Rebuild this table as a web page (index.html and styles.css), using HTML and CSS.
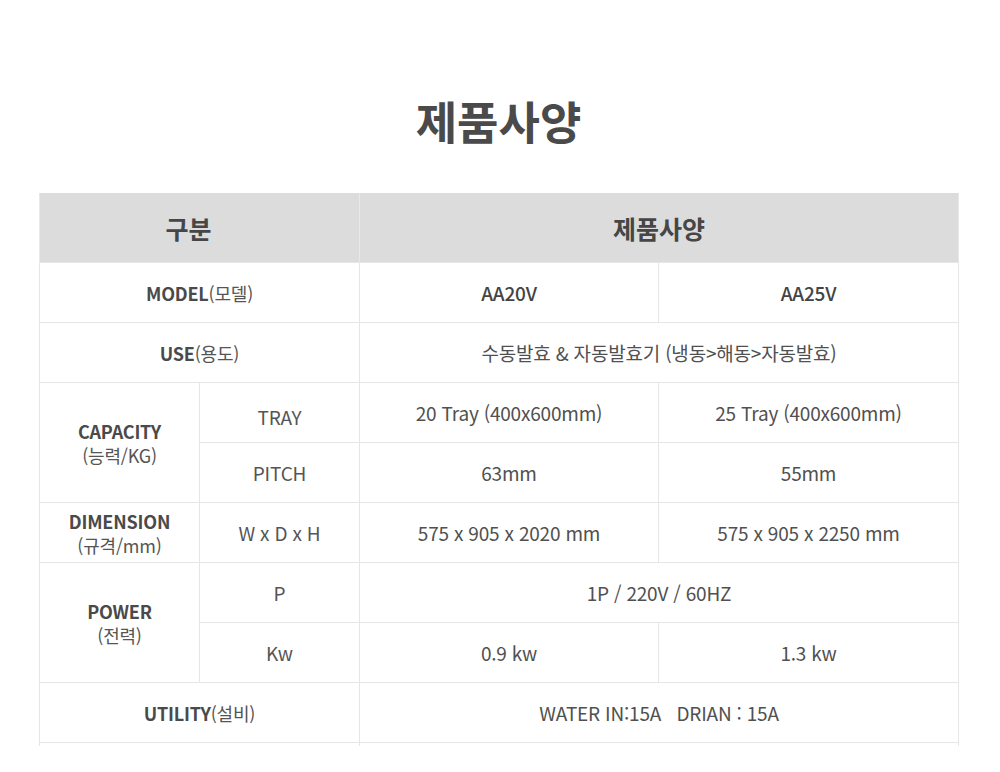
FILE: index.html
```html
<!DOCTYPE html>
<html lang="ko">
<head>
<meta charset="utf-8">
<title>제품사양</title>
<link rel="stylesheet" href="styles.css">
</head>
<body>
<section class="spec">
  <h1 class="title">제품사양</h1>
  <table class="spec-table">
    <colgroup>
      <col class="c1"><col class="c2"><col class="c3"><col class="c4">
    </colgroup>
    <thead>
      <tr>
        <th colspan="2" class="th-first">구분</th>
        <th colspan="2">제품사양</th>
      </tr>
    </thead>
    <tbody>
      <tr>
        <td colspan="2" class="label"><b>MODEL</b>(모델)</td>
        <td class="strong">AA20V</td>
        <td class="strong">AA25V</td>
      </tr>
      <tr>
        <td colspan="2" class="label"><b>USE</b>(용도)</td>
        <td colspan="2">수동발효 &amp; 자동발효기 (냉동&gt;해동&gt;자동발효)</td>
      </tr>
      <tr>
        <td rowspan="2" class="label"><b>CAPACITY</b><br>(능력/KG)</td>
        <td class="sub low">TRAY</td>
        <td>20 Tray (400x600mm)</td>
        <td>25 Tray (400x600mm)</td>
      </tr>
      <tr>
        <td class="sub">PITCH</td>
        <td>63mm</td>
        <td>55mm</td>
      </tr>
      <tr>
        <td class="label"><b>DIMENSION</b><br>(규격/mm)</td>
        <td class="sub">W x D x H</td>
        <td>575 x 905 x 2020 mm</td>
        <td>575 x 905 x 2250 mm</td>
      </tr>
      <tr>
        <td rowspan="2" class="label"><b>POWER</b><br>(전력)</td>
        <td class="sub">P</td>
        <td colspan="2">1P / 220V / 60HZ</td>
      </tr>
      <tr>
        <td class="sub">Kw</td>
        <td>0.9 kw</td>
        <td>1.3 kw</td>
      </tr>
      <tr>
        <td colspan="2" class="label"><b>UTILITY</b>(설비)</td>
        <td colspan="2">WATER IN:15A &nbsp; DRIAN : 15A</td>
      </tr>
      <tr class="tail">
        <td colspan="2"></td>
        <td colspan="2"></td>
      </tr>
    </tbody>
  </table>
</section>
</body>
</html>
```

FILE: styles.css
```css
html, body {
  margin: 0;
  padding: 0;
  background: #ffffff;
}

body {
  font-family: "Noto Sans CJK KR", "Noto Sans", sans-serif;
  color: #555555;
}

.spec {
  padding: 88px 42px 0 39px;
}

.title {
  margin: 0 0 40px;
  height: 65px;
  line-height: 65px;
  text-align: center;
  font-size: 45px;
  font-weight: 700;
  color: #4a4a4b;
  letter-spacing: 0;
}

.spec-table {
  width: 919px;
  border-collapse: collapse;
  table-layout: fixed;
}

.c1 { width: 160px; }
.c2 { width: 160px; }
.c3 { width: 299px; }
.c4 { width: 300px; }

.spec-table th {
  height: 69px;
  padding: 0;
  background: #dcdcdd;
  font-size: 25px;
  font-weight: 700;
  color: #464646;
  border-left: 1px solid #e8e8e8;
  border-right: 1px solid #e8e8e8;
  vertical-align: middle;
}

.spec-table th.th-first {
  padding-right: 22px;
}

.spec-table td {
  height: 59px;
  padding: 0;
  text-align: center;
  vertical-align: middle;
  font-size: 19px;
  line-height: 24px;
  color: #505050;
  border: 1px solid #e6e6e6;
  letter-spacing: -0.2px;
}

.spec-table td.label {
  font-size: 18px;
  color: #555555;
}

.spec-table td.label b {
  font-weight: 700;
  color: #4a4a4a;
}

.spec-table td.strong {
  font-weight: 500;
  color: #444444;
}

.spec-table td.sub {
  color: #555555;
}

.spec-table td.low {
  height: 51px;
  padding-top: 8px;
}

.spec-table tr.tail td {
  height: 3px;
  border-bottom: none;
}
```
